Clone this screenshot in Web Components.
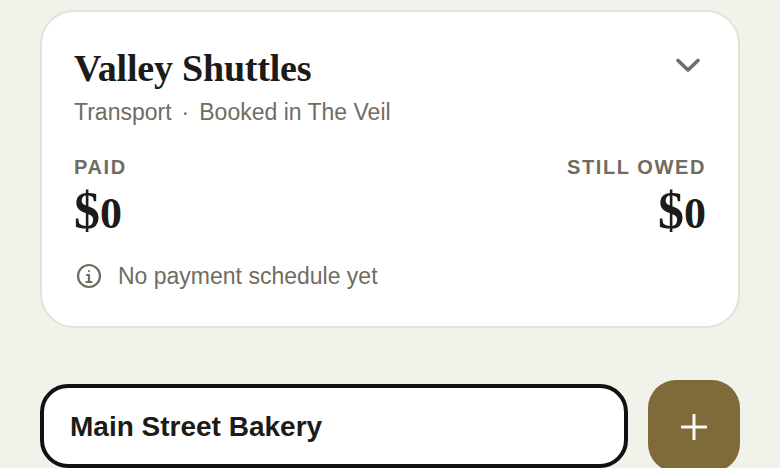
<!DOCTYPE html>
<html>
<head>
<meta charset="utf-8">
<style>
  html, body { margin: 0; height: 468px; overflow: hidden; background: #f1f2ea; }
  body { font-family: "Liberation Sans", Arial, sans-serif; padding: 10px 40px 0; box-sizing: border-box; width: 780px; }
</style>
</head>
<body>
<vendor-card name="Valley Shuttles" category="Transport" source="Booked in The Veil"></vendor-card>
<add-vendor value="Main Street Bakery"></add-vendor>

<script>
class MoneyStat extends HTMLElement {
  connectedCallback() {
    const align = this.getAttribute('align') || 'left';
    this.attachShadow({ mode: 'open' }).innerHTML = `
      <style>
        :host { display: flex; flex-direction: column; text-align: ${align}; }
        .label {
          font-size: 20px;
          line-height: 26px;
          font-weight: 700;
          letter-spacing: 1.6px;
          color: #716c5f;
        }
        .value {
          margin-top: 4px;
          font-family: "Liberation Serif", "Times New Roman", serif;
          font-weight: 700;
          font-size: 52px;
          line-height: 54px;
          color: #1d1b17;
        }
        .zero { font-size: 44px; }
      </style>
      <div class="label">${this.getAttribute('label')}</div>
      <div class="value">$<span class="zero">${this.getAttribute('amount')}</span></div>
    `;
  }
}

class VendorCard extends HTMLElement {
  connectedCallback() {
    this.attachShadow({ mode: 'open' }).innerHTML = `
      <style>
        :host {
          display: block;
          box-sizing: border-box;
          height: 318px;
          background: #fff;
          border: 2px solid #e2e3d8;
          border-radius: 34px;
          padding: 32px;
        }
        .head { display: flex; justify-content: space-between; align-items: flex-start; }
        h2 {
          margin: 0;
          font-family: "Liberation Serif", "Times New Roman", serif;
          font-size: 38px;
          line-height: 48px;
          font-weight: 700;
          letter-spacing: -0.2px;
          color: #1d1b17;
        }
        svg.chev { width: 28px; height: 16px; margin: 13px 4px 0 0; }
        .sub {
          margin-top: 4px;
          font-size: 23px;
          line-height: 32px;
          color: #716c5f;
          display: flex;
        }
        .dot { margin: 0 10px; }
        .stats { display: flex; justify-content: space-between; margin-top: 26px; }
        .note {
          display: flex;
          align-items: center;
          gap: 16px;
          margin-top: 19px;
          font-size: 23px;
          line-height: 32px;
          color: #716c5f;
        }
        svg.info { width: 26px; height: 26px; margin-left: 2px; }
      </style>
      <div class="head">
        <h2>${this.getAttribute('name')}</h2>
        <svg class="chev" viewBox="0 0 28 16" fill="none" stroke="#716c5f" stroke-width="3.6" stroke-linecap="round" stroke-linejoin="round"><path d="M4 3.5l10 9.5 10-9.5"/></svg>
      </div>
      <div class="sub"><span>${this.getAttribute('category')}</span><span class="dot">·</span><span>${this.getAttribute('source')}</span></div>
      <div class="stats">
        <money-stat label="PAID" amount="0"></money-stat>
        <money-stat label="STILL OWED" amount="0" align="right"></money-stat>
      </div>
      <div class="note">
        <svg class="info" viewBox="0 0 26 26" fill="none" stroke="#716c5f" stroke-width="2.2" stroke-linecap="round" stroke-linejoin="round">
          <circle cx="13" cy="13" r="11"/>
          <path d="M11 12h2v7M10.5 19h5"/>
          <circle cx="13" cy="8" r="1.1" fill="#716c5f" stroke="none"/>
        </svg>
        <span>No payment schedule yet</span>
      </div>
    `;
  }
}

class AddVendor extends HTMLElement {
  connectedCallback() {
    this.attachShadow({ mode: 'open' }).innerHTML = `
      <style>
        :host {
          display: flex;
          align-items: center;
          gap: 20px;
          margin-top: 52px;
          height: 92px;
        }
        .field {
          flex: 1;
          box-sizing: border-box;
          height: 84px;
          display: flex;
          align-items: center;
          background: #fff;
          border: 4px solid #111;
          border-radius: 28px;
          padding: 2px 26px 0;
          font-size: 28px;
          font-weight: 700;
          color: #1d1b17;
        }
        .add {
          width: 92px;
          height: 92px;
          flex: none;
          display: flex;
          align-items: center;
          justify-content: center;
          background: #7f6a3a;
          border-radius: 28px;
        }
        svg { width: 26px; height: 26px; margin-top: 2px; }
      </style>
      <div class="field">${this.getAttribute('value')}</div>
      <div class="add">
        <svg viewBox="0 0 26 26" fill="none" stroke="#fbf9f0" stroke-width="3" stroke-linecap="round"><path d="M13 1v24M1 13h24"/></svg>
      </div>
    `;
  }
}

customElements.define('money-stat', MoneyStat);
customElements.define('vendor-card', VendorCard);
customElements.define('add-vendor', AddVendor);
</script>
</body>
</html>
